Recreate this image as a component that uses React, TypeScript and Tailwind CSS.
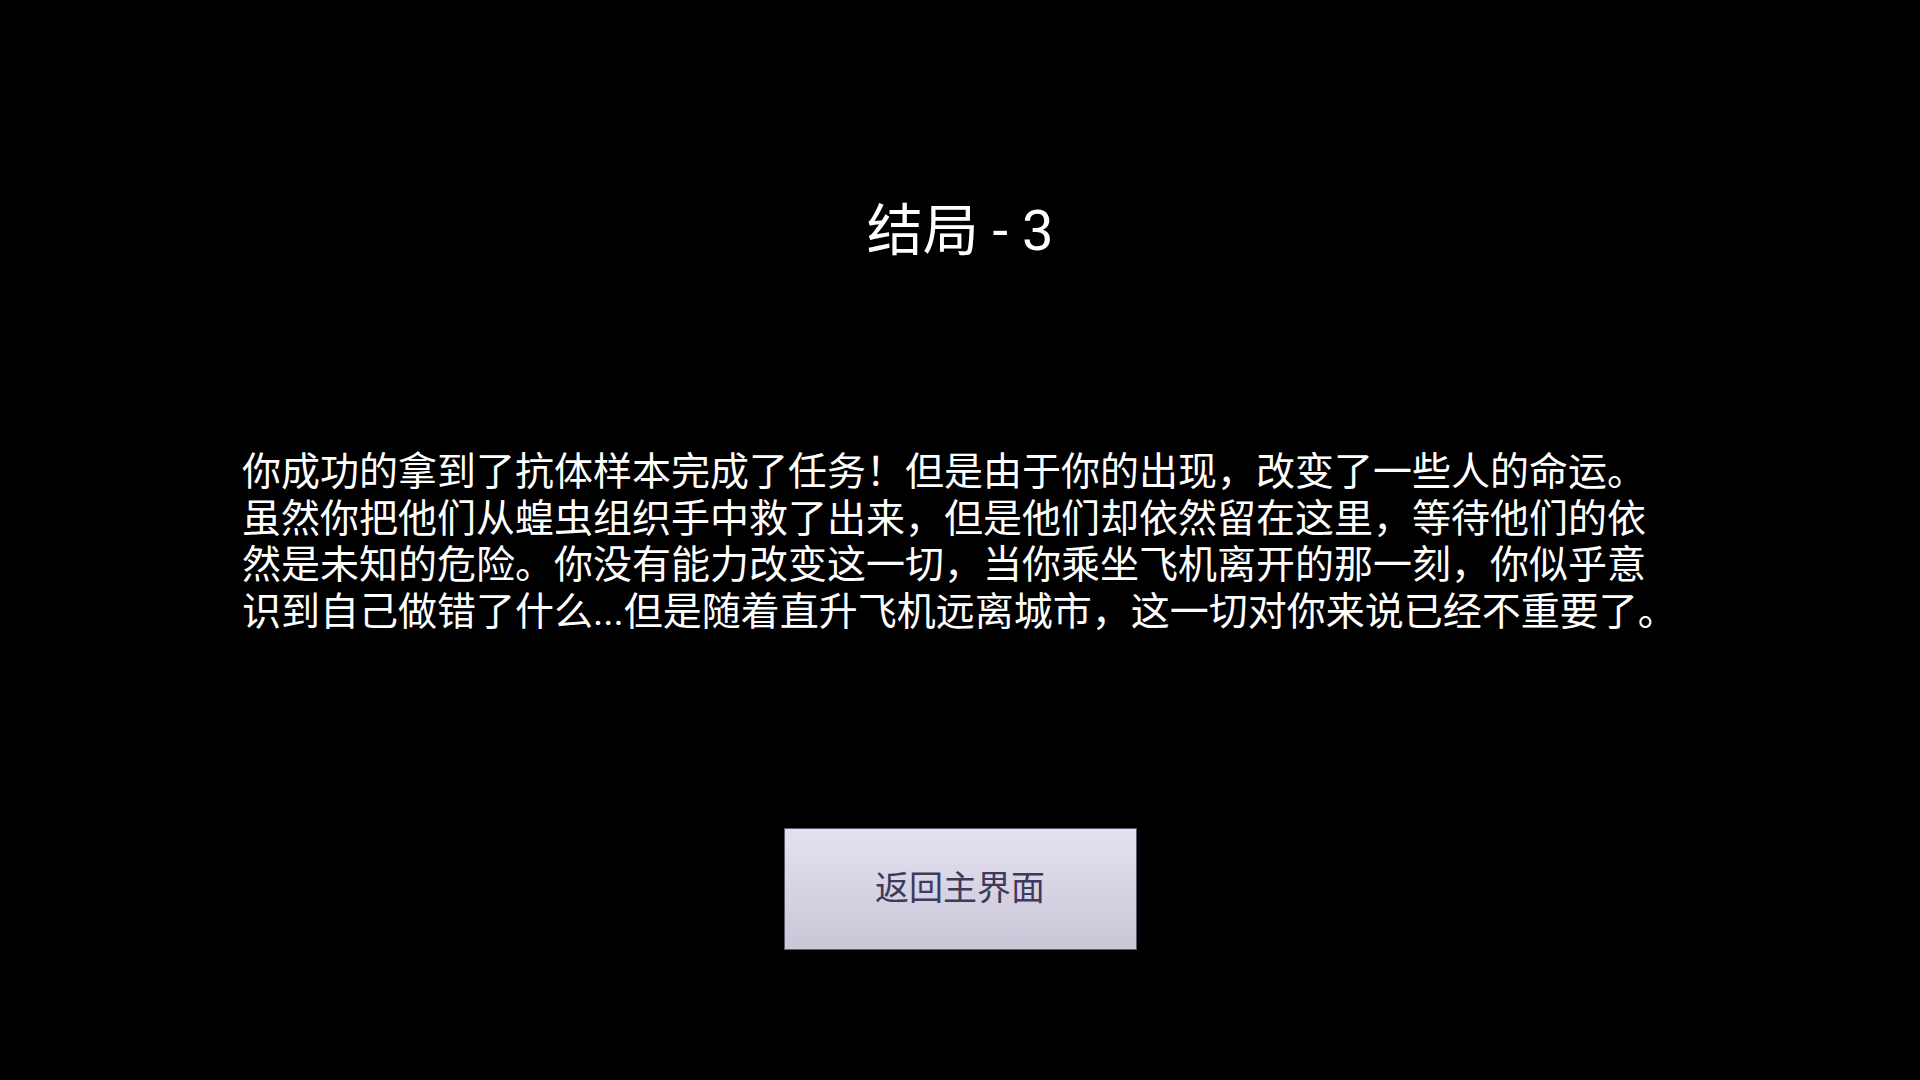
const lines = [
  '你成功的拿到了抗体样本完成了任务！但是由于你的出现，改变了一些人的命运。',
  '虽然你把他们从蝗虫组织手中救了出来，但是他们却依然留在这里，等待他们的依',
  '然是未知的危险。你没有能力改变这一切，当你乘坐飞机离开的那一刻，你似乎意',
  '识到自己做错了什么...但是随着直升飞机远离城市，这一切对你来说已经不重要了。',
];

export default function App() {
  return (
    <main
      className="w-[1920px] h-[1080px] bg-black flex flex-col items-center overflow-hidden"
      style={{ fontFamily: 'Roboto, "Noto Sans CJK SC", "Noto Sans", sans-serif' }}
    >
      {/* Title */}
      <h1 className="mt-[197px] text-[56px] leading-[68px] text-white">结局 - 3</h1>

      {/* Ending text */}
      <div className="mt-[184px] self-start pl-[242px] text-[39px] leading-[46.7px] text-white">
        {lines.map((line) => (
          <p key={line} className="whitespace-nowrap">
            {line}
          </p>
        ))}
      </div>

      {/* Back button */}
      <button
        type="button"
        className="mt-[192px] w-[353px] h-[122px] border border-[#5c5a6c] bg-gradient-to-b from-[#e4e2f0] to-[#c9c6d7] text-[34px] text-[#3d3a5e] flex items-center justify-center"
      >
        返回主界面
      </button>
    </main>
  );
}
